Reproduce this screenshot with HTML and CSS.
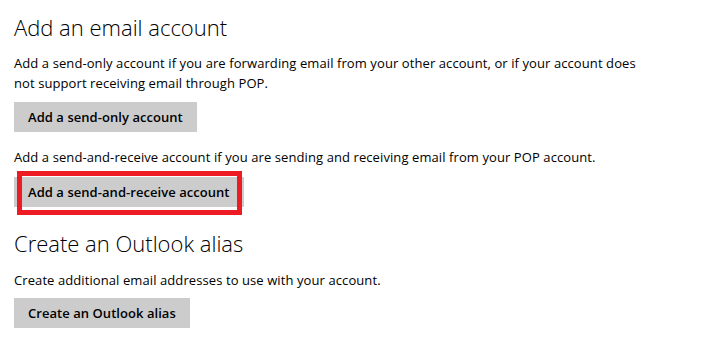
FILE: index.html
```html
<!DOCTYPE html>
<html lang="en">
<head>
<meta charset="utf-8">
<title>Email accounts</title>
<link rel="stylesheet" href="styles.css">
</head>
<body>
<main class="settings">
  <section class="group">
    <h2 class="group-title">Add an email account</h2>
    <p class="desc">Add a send-only account if you are forwarding email from your other account, or if your account does not support receiving email through POP.</p>
    <button class="btn">Add a send-only account</button>
    <p class="desc desc-after-btn">Add a send-and-receive account if you are sending and receiving email from your POP account.</p>
    <div class="highlight-wrap">
      <button class="btn">Add a send-and-receive account</button>
      <span class="highlight"></span>
    </div>
  </section>
  <section class="group group-next">
    <h2 class="group-title">Create an Outlook alias</h2>
    <p class="desc">Create additional email addresses to use with your account.</p>
    <button class="btn">Create an Outlook alias</button>
  </section>
</main>
</body>
</html>
```

FILE: styles.css
```css
* { box-sizing: border-box; }

html, body {
  margin: 0;
  background: #ffffff;
}

body {
  font-family: "Open Sans", "Noto Sans", sans-serif;
  color: #000000;
}

.settings {
  width: 652px;
  padding: 12px 0 0 14px;
}

.group {
  display: flex;
  flex-direction: column;
  align-items: flex-start;
}

.group-next {
  margin-top: 21px;
}

.group-title {
  margin: 0;
  font-size: 22px;
  font-weight: 300;
  line-height: 30px;
  color: #000000;
}

.desc {
  margin: 11px 0 9px;
  font-size: 13px;
  letter-spacing: 0.09px;
  line-height: 20px;
}

.desc-after-btn {
  margin-top: 15px;
  margin-bottom: 10px;
}

.group-next .desc {
  margin-top: 12px;
  margin-bottom: 8px;
}

.btn {
  display: block;
  height: 30px;
  padding: 0 14px;
  border: 0;
  background: #cccccc;
  font-family: inherit;
  font-size: 13px;
  font-weight: 600;
  letter-spacing: 0.05px;
  color: #000000;
  line-height: 30px;
}

.highlight-wrap {
  position: relative;
}

.highlight {
  position: absolute;
  left: 3px;
  top: -6px;
  right: 2px;
  bottom: -8px;
  border: 5px solid #ed1c24;
}
```
